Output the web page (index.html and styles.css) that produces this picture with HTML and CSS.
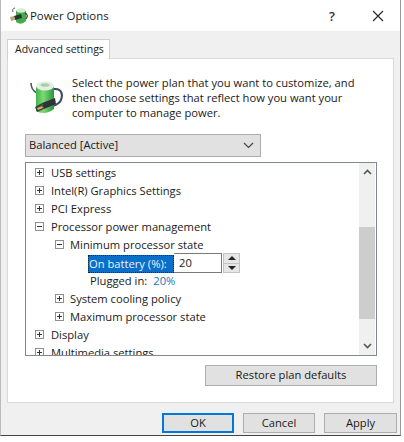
FILE: index.html
```html
<!DOCTYPE html>
<html lang="en">
<head>
<meta charset="utf-8">
<title>Power Options</title>
<link rel="stylesheet" href="styles.css">
</head>
<body>
<div class="window">
  <header class="titlebar">
    <svg class="app-icon" width="20" height="20" viewBox="0 0 20 20">
      <path d="M4 6 C3 4 4 2 6 2" fill="none" stroke="#555" stroke-width="1"/>
      <path d="M7 5 Q12 1 17 5 L17 15 Q12 20 7 16 Z" fill="#3fae49"/>
      <ellipse cx="12" cy="4.5" rx="4.5" ry="2.2" fill="#d5ecd6"/>
      <path d="M12 8 L5 10 L6 14 L13 12 Z" fill="#2d2f33"/>
      <path d="M1 11 L5 10 L6 14 L2 15 Z" fill="#b8a878"/>
      <path d="M16 7 Q20 9 17 13" fill="none" stroke="#333" stroke-width="1.2"/>
    </svg>
    <span class="title">Power Options</span>
    <span class="help">?</span>
    <svg class="close" width="12" height="12" viewBox="0 0 12 12"><path d="M1 1 L11 11 M11 1 L1 11" stroke="#222" stroke-width="1.1" fill="none"/></svg>
  </header>
  <div class="content">
    <div class="tab">Advanced settings</div>
    <section class="panel">
      <div class="intro">
        <svg class="plan-icon" width="34" height="38" viewBox="0 0 34 38">
          <defs>
            <linearGradient id="bat" x1="0" x2="1" y1="0" y2="0">
              <stop offset="0" stop-color="#3fb54c"/>
              <stop offset="0.4" stop-color="#7fd873"/>
              <stop offset="1" stop-color="#27973c"/>
            </linearGradient>
          </defs>
          <path d="M1 3 C1 8 3 11 7 13" fill="none" stroke="#4c5a6a" stroke-width="1.6"/>
          <path d="M24 9 C32 8 33 15 31 20 C29 24 26 25 23 26" fill="none" stroke="#3e4a5e" stroke-width="2"/>
          <path d="M6 7 Q15 1 24 7 L24 29 Q15 36 6 31 Z" fill="url(#bat)"/>
          <ellipse cx="15" cy="6" rx="9" ry="4.5" fill="#e3efe2"/>
          <ellipse cx="15" cy="5" rx="4.5" ry="1.8" fill="#a9cfa8"/>
          <path d="M25 18 L12 23 L14 29 L26 24 Z" fill="#2f333a"/>
          <path d="M12 23 L5 27 L7 32 L14 29 Z" fill="#3b4048"/>
          <path d="M7 28 L12 26 L13 28 L8 30 Z" fill="#d4b04a"/>
        </svg>
        <p class="intro-text">Select the power plan that you want to customize, and then choose settings that reflect how you want your computer to manage power.</p>
      </div>
      <div class="combo">
        <span>Balanced [Active]</span>
        <svg class="combo-arrow" width="11" height="7" viewBox="0 0 11 7"><path d="M1 1 L5.5 5.5 L10 1" fill="none" stroke="#444" stroke-width="1.2"/></svg>
      </div>
      <div class="tree">
        <ul class="rows">
          <li class="row"><i class="box plus"></i>USB settings</li>
          <li class="row"><i class="box plus"></i>Intel(R) Graphics Settings</li>
          <li class="row"><i class="box plus"></i>PCI Express</li>
          <li class="row"><i class="box minus"></i>Processor power management</li>
          <li class="row lvl1"><i class="box minus"></i>Minimum processor state</li>
          <li class="row lvl2">
            <span class="selected">On battery (%):</span>
            <span class="edit">20</span>
            <span class="spin">
              <span class="spin-btn"><i class="tri-up"></i></span>
              <span class="spin-btn"><i class="tri-down"></i></span>
            </span>
          </li>
          <li class="row lvl2"><span class="label">Plugged in:</span><span class="value">20%</span></li>
          <li class="row lvl1"><i class="box plus"></i>System cooling policy</li>
          <li class="row lvl1"><i class="box plus"></i>Maximum processor state</li>
          <li class="row"><i class="box plus"></i>Display</li>
          <li class="row"><i class="box plus"></i>Multimedia settings</li>
        </ul>
        <div class="scrollbar">
          <svg class="arrow" width="9" height="6" viewBox="0 0 9 6"><path d="M1 5 L4.5 1.5 L8 5" fill="none" stroke="#555" stroke-width="1.6"/></svg>
          <div class="track"><div class="thumb"></div></div>
          <svg class="arrow" width="9" height="6" viewBox="0 0 9 6"><path d="M1 1 L4.5 4.5 L8 1" fill="none" stroke="#555" stroke-width="1.6"/></svg>
        </div>
      </div>
      <div class="restore-row"><button class="btn restore">Restore plan defaults</button></div>
    </section>
    <footer class="footer">
      <button class="btn primary">OK</button>
      <button class="btn">Cancel</button>
      <button class="btn apply">Apply</button>
    </footer>
  </div>
</div>
</body>
</html>
```
FILE: styles.css
```css
* { box-sizing: border-box; }
html, body { margin: 0; padding: 0; }
body {
  width: 404px;
  height: 442px;
  background: #fff;
  overflow: hidden;
  font-family: "Open Sans", "Noto Sans", sans-serif;
  font-size: 11.2px;
  color: #1a1a1a;
}
.window {
  width: 401px;
  height: 436px;
  background: #f0f0f0;
  border-left: 1px solid #bbb;
  border-bottom: 1px solid #444;
  border-right: 1px solid #999;
}
.titlebar {
  height: 31px;
  background: #fff;
  display: flex;
  align-items: center;
  padding-left: 8px;
}
.app-icon { margin-right: 1px; }
.title { flex: 1; font-size: 11.4px; }
.help { font-size: 13px; color: #333; margin-right: 37px; font-weight: 600; }
.close { margin-right: 16px; }
.content { padding: 8px 4px 0 6px; }
.tab {
  width: 103px;
  height: 20px;
  background: #fff;
  border: 1px solid #d0d0d0;
  border-bottom: 0;
  font-size: 10.5px;
  line-height: 18px;
  padding-left: 7px;
  position: relative;
  z-index: 1;
  margin-bottom: -1px;
  white-space: nowrap;
}
.panel {
  height: 345px;
  width: 387px;
  background: #fff;
  border: 1px solid #d9d9d9;
  padding: 15px 16px 0 17px;
}
.intro { display: flex; align-items: flex-start; height: 60px; }
.plan-icon { margin: 6px 0 0 5px; flex: none; }
.intro-text { margin: 0 0 0 8px; width: 300px; line-height: 15px; padding-top: 1px; }
.combo {
  width: 236px;
  height: 23px;
  background: #e1e1e1;
  border: 1px solid #adadad;
  display: flex;
  align-items: center;
  justify-content: space-between;
  padding: 0 6px 2px 3px;
  margin-bottom: 5px;
}
.combo-arrow { margin-top: 2px; }
.tree {
  width: 352px;
  height: 194px;
  border: 1px solid #828790;
  background: #fff;
  display: flex;
  overflow: hidden;
}
.rows { list-style: none; margin: 0; padding: 1px 0 0 0; flex: 1; }
.row { height: 18px; display: flex; align-items: center; padding: 0 0 2px 9px; white-space: nowrap; }
.lvl1 { padding-left: 29px; }
.lvl1 .box { margin-right: 6px; }
.lvl2 { padding-left: 62px; }
.box {
  width: 9px;
  height: 9px;
  border: 1px solid #8e8f8f;
  margin: 1px 7px 0 0;
  position: relative;
  background: #fff;
  flex: none;
}
.box::before {
  content: "";
  position: absolute;
  left: 1px; top: 3px;
  width: 5px; height: 1px;
  background: #333;
}
.plus::after {
  content: "";
  position: absolute;
  left: 3px; top: 1px;
  width: 1px; height: 5px;
  background: #333;
}
.selected {
  background: #0a6fc9;
  color: #e9f3fb;
  height: 18px;
  line-height: 17px;
  width: 86px;
  padding-left: 1px;
  margin-top: 4px;
  outline: 1px dotted #222;
  outline-offset: -1px;
}
.edit {
  width: 48px;
  height: 20px;
  border: 1px solid #7a7a7a;
  border-left: 0;
  line-height: 17px;
  padding-left: 5px;
  margin-top: 2px;
}
.spin { display: flex; flex-direction: column; margin: 2px 0 0 1px; height: 20px; width: 17px; border: 1px solid #c4c4c4; }
.spin-btn { flex: 1; background: #e6e6e6; border-bottom: 1px solid #c4c4c4; display: flex; align-items: center; justify-content: center; }
.spin-btn:last-child { border-bottom: 0; }
.tri-up { border: 4px solid transparent; border-top: 0; border-bottom: 4px solid #222; }
.tri-down { border: 4px solid transparent; border-bottom: 0; border-top: 4px solid #222; }
.label { padding-left: 2px; margin-right: 6px; }
.value { color: #1a76b8; }
.scrollbar {
  width: 16px;
  margin-right: 1px;
  background: #f0f0f0;
  display: flex;
  flex-direction: column;
  align-items: center;
  flex: none;
}
.arrow { margin: 6px 0; flex: none; }
.track { flex: 1; width: 100%; padding-top: 46px; }
.thumb { height: 92px; background: #cdcdcd; }
.restore-row { display: flex; padding: 9px 0 0 180px; }
.btn {
  font: inherit;
  color: #1a1a1a;
  background: #e1e1e1;
  border: 1px solid #adadad;
  width: 72px;
  height: 20px;
  padding: 0 0 2px;
}
.restore { width: 173px; height: 21px; }
.primary { border: 2px solid #0078d7; }
.apply { width: 73px; }
.footer {
  display: flex;
  justify-content: flex-end;
  gap: 9px;
  padding: 10px 0 0 0;
  width: 390px;
}
```
